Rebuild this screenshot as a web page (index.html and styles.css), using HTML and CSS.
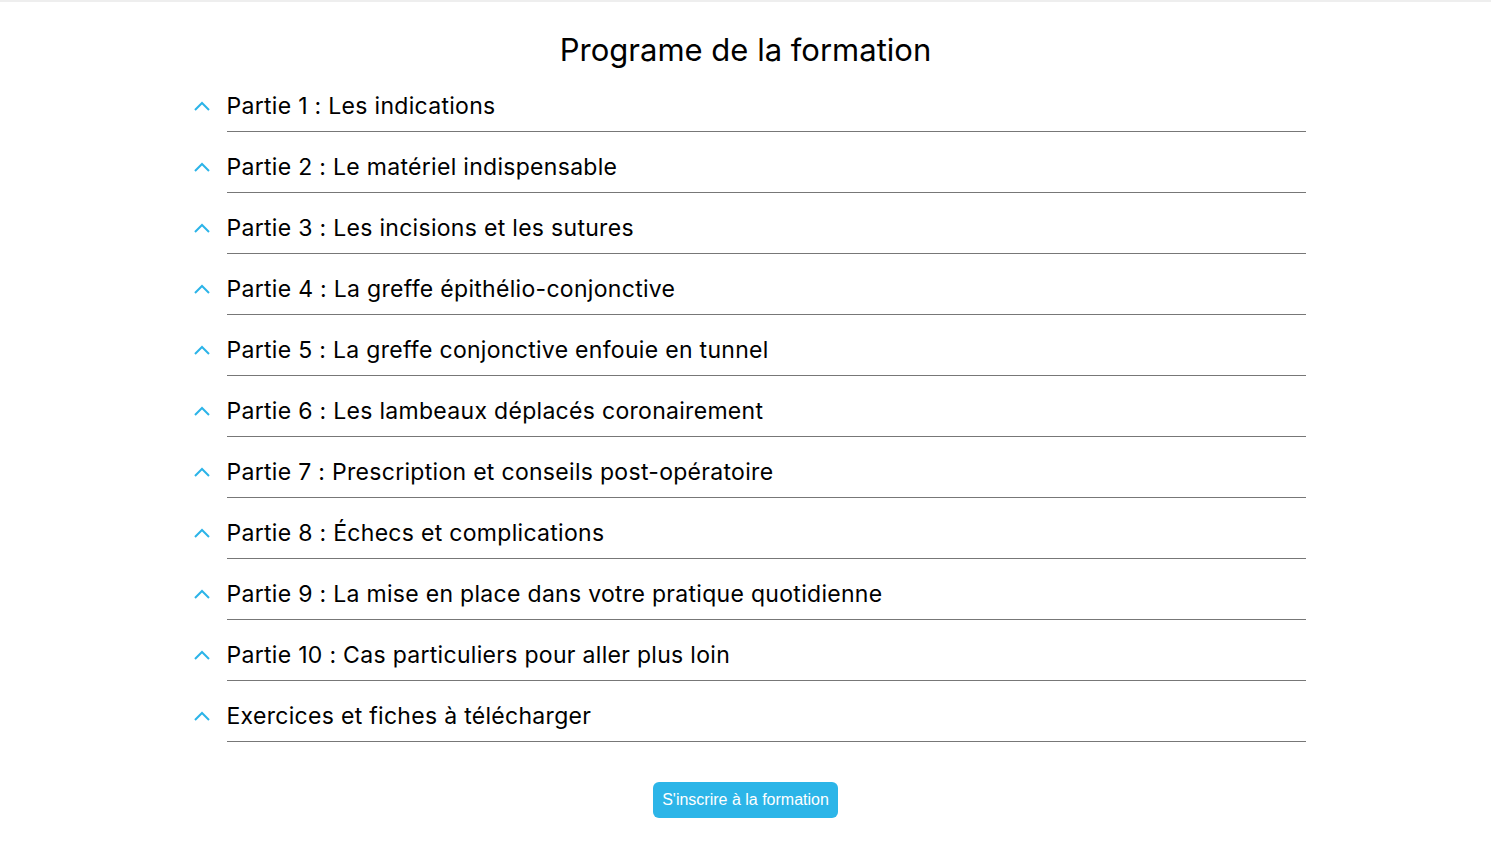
FILE: index.html
```html
<!DOCTYPE html>
<html lang="fr">
<head>
<meta charset="utf-8">
<title>Programe de la formation</title>
<link rel="stylesheet" href="styles.css">
</head>
<body>
<div class="topbar"></div>
<main class="program">
  <h2 class="title">Programe de la formation</h2>
  <ul class="list">
    <li class="item"><svg class="chev" viewBox="0 0 16 10"><path d="M1 9 L8 2 L15 9"/></svg><span class="label">Partie 1 : Les indications</span></li>
    <li class="item"><svg class="chev" viewBox="0 0 16 10"><path d="M1 9 L8 2 L15 9"/></svg><span class="label">Partie 2 : Le matériel indispensable</span></li>
    <li class="item"><svg class="chev" viewBox="0 0 16 10"><path d="M1 9 L8 2 L15 9"/></svg><span class="label">Partie 3 : Les incisions et les sutures</span></li>
    <li class="item"><svg class="chev" viewBox="0 0 16 10"><path d="M1 9 L8 2 L15 9"/></svg><span class="label">Partie 4 : La greffe épithélio-conjonctive</span></li>
    <li class="item"><svg class="chev" viewBox="0 0 16 10"><path d="M1 9 L8 2 L15 9"/></svg><span class="label">Partie 5 : La greffe conjonctive enfouie en tunnel</span></li>
    <li class="item"><svg class="chev" viewBox="0 0 16 10"><path d="M1 9 L8 2 L15 9"/></svg><span class="label">Partie 6 : Les lambeaux déplacés coronairement</span></li>
    <li class="item"><svg class="chev" viewBox="0 0 16 10"><path d="M1 9 L8 2 L15 9"/></svg><span class="label">Partie 7 : Prescription et conseils post-opératoire</span></li>
    <li class="item"><svg class="chev" viewBox="0 0 16 10"><path d="M1 9 L8 2 L15 9"/></svg><span class="label">Partie 8 : Échecs et complications</span></li>
    <li class="item"><svg class="chev" viewBox="0 0 16 10"><path d="M1 9 L8 2 L15 9"/></svg><span class="label">Partie 9 : La mise en place dans votre pratique quotidienne</span></li>
    <li class="item"><svg class="chev" viewBox="0 0 16 10"><path d="M1 9 L8 2 L15 9"/></svg><span class="label">Partie 10 : Cas particuliers pour aller plus loin</span></li>
    <li class="item"><svg class="chev" viewBox="0 0 16 10"><path d="M1 9 L8 2 L15 9"/></svg><span class="label">Exercices et fiches à télécharger</span></li>
  </ul>
  <div class="cta-wrap"><a class="cta" href="#">S'inscrire à la formation</a></div>
</main>
</body>
</html>
```

FILE: styles.css
```css
html, body {
  margin: 0;
  padding: 0;
  background: #fff;
}
body {
  font-family: "Inter", "Liberation Sans", sans-serif;
  color: #000;
}
.topbar {
  height: 2px;
  background: #eeeeee;
}
.program {
  display: flex;
  flex-direction: column;
}
.title {
  margin: 0;
  padding: 28px 0 1px;
  text-align: center;
  font-size: 31px;
  line-height: 40px;
  font-weight: 400;
}
.list {
  list-style: none;
  margin: 0 0 0 calc(50% - 552px);
  padding: 0;
  width: 1112px;
}
.item {
  display: flex;
  align-items: center;
  height: 61px;
}
.chev {
  width: 16px;
  height: 10px;
  margin-top: 9px;
  flex: 0 0 16px;
  fill: none;
  stroke: #2cb4e8;
  stroke-width: 2;
  stroke-linecap: butt;
}
.label {
  flex: 1;
  margin-left: 17px;
  align-self: stretch;
  box-sizing: border-box;
  padding-top: 18px;
  line-height: 34px;
  font-size: 23px;
  letter-spacing: 0.3px;
  border-bottom: 1px solid #777;
}
.cta-wrap {
  display: flex;
  justify-content: center;
  padding-top: 40px;
}
.cta {
  display: block;
  background: #2cb5e8;
  color: #fff;
  text-decoration: none;
  font-family: "Liberation Sans", Arial, sans-serif;
  font-size: 16px;
  line-height: 36px;
  height: 36px;
  padding: 0 9px;
  border-radius: 6px;
}
```
